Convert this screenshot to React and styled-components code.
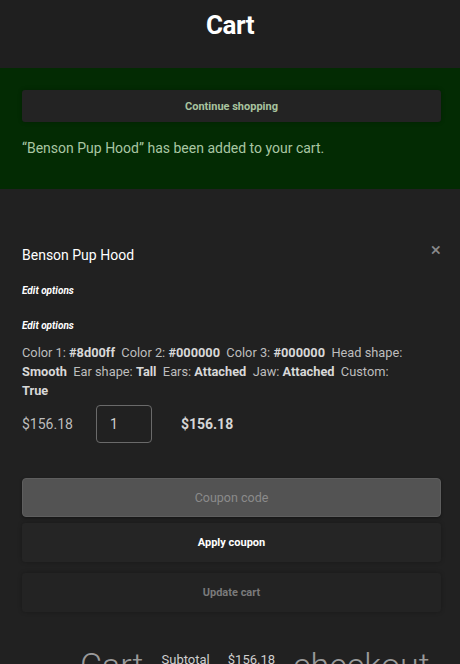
import styled, { createGlobalStyle } from "styled-components";

const GlobalStyle = createGlobalStyle`
  html, body {
    margin: 0;
    padding: 0;
    background: #212121;
    font-family: Roboto, "Liberation Sans", sans-serif;
    overflow: hidden;
  }
`;

const Page = styled.div`
  width: 460px;
  height: 664px;
  overflow: hidden;
  background: #212121;
`;

const Header = styled.header`
  height: 68px;
  display: flex;
  justify-content: center;
  align-items: flex-start;
  background: #1f1f1f;
`;

const Title = styled.h1`
  margin: 10px 0 0;
  font-size: 26px;
  font-weight: 700;
  color: #fff;
  letter-spacing: -0.5px;
`;

const Notice = styled.div`
  background: #032b03;
  padding: 22px 19px 33px 22px;
  display: flex;
  flex-direction: column;
  gap: 18px;
`;

const Button = styled.button`
  height: ${(p) => p.$h || 39}px;
  width: 100%;
  margin-top: ${(p) => p.$mt || 0}px;
  border: none;
  border-radius: 3px;
  background: ${(p) => p.$bg || "#252525"};
  color: ${(p) => p.$color || "#fff"};
  font-family: inherit;
  font-size: 11px;
  font-weight: 700;
  box-shadow: 0 0 4px rgba(0, 0, 0, 0.25);
`;

const Message = styled.p`
  margin: 0;
  font-size: 14px;
  color: #a9c7a3;
`;

const Content = styled.main`
  padding: 58px 19px 0 22px;
`;

const ItemHead = styled.div`
  display: flex;
  justify-content: space-between;
  align-items: center;
`;

const ItemName = styled.h2`
  margin: 0;
  font-size: 14px;
  font-weight: 400;
  color: #fff;
`;

const Remove = styled.span`
  color: #8a8a8a;
  font-size: 19px;
  line-height: 1;
  margin-top: -11px;
`;

const EditLink = styled.div`
  margin-top: ${(p) => p.$mt}px;
  font-size: 10px;
  font-weight: 700;
  font-style: italic;
  color: #fff;
`;

const Options = styled.p`
  margin: 12px 0 0;
  max-width: 386px;
  font-size: 12.8px;
  line-height: 19px;
  color: #bdbdbd;

  b {
    color: #d8d8d8;
  }
`;

const PriceRow = styled.div`
  display: flex;
  align-items: center;
  margin-top: 5px;
  font-size: 14px;
  color: #bdbdbd;
`;

const Qty = styled.div`
  width: 56px;
  height: 38px;
  margin: 0 29px 0 23px;
  border: 1px solid #6a6a6a;
  border-radius: 4px;
  box-sizing: border-box;
  display: flex;
  align-items: center;
  padding-left: 13px;
  color: #cfcfcf;
`;

const Total = styled.span`
  font-weight: 700;
  color: #d6d6d6;
`;

const Actions = styled.div`
  margin-top: 35px;
  display: flex;
  flex-direction: column;
  gap: 6px;
`;

const Coupon = styled.div`
  height: 39px;
  border-radius: 4px;
  background: #535353;
  border: 1px solid #5e5e5e;
  box-sizing: border-box;
  display: flex;
  align-items: center;
  justify-content: center;
  color: #8b8b8b;
  font-size: 12.5px;
  box-shadow: 0 1px 3px rgba(0, 0, 0, 0.4);
`;

const Totals = styled.div`
  display: flex;
  align-items: flex-start;
  gap: 18px;
  margin-top: 36px;
  padding-left: 58px;
  white-space: nowrap;
`;

const Big = styled.span`
  font-size: 34px;
  font-weight: 300;
  color: #9a9a9a;
  line-height: 1;
`;

const Small = styled.span`
  font-size: 13px;
  color: #cfcfcf;
  margin-top: 4px;
`;

export default function App() {
  return (
    <Page>
      <GlobalStyle />
      <Header>
        <Title>Cart</Title>
      </Header>
      <Notice>
        <Button $h={32} $bg="#232323" $color="#a8c39f">
          Continue shopping
        </Button>
        <Message>“Benson Pup Hood” has been added to your cart.</Message>
      </Notice>
      <Content>
        <ItemHead>
          <ItemName>Benson Pup Hood</ItemName>
          <Remove>×</Remove>
        </ItemHead>
        <EditLink $mt={22}>Edit options</EditLink>
        <EditLink $mt={24}>Edit options</EditLink>
        <Options>
          Color 1: <b>#8d00ff</b>&nbsp;&nbsp;Color 2: <b>#000000</b>&nbsp;&nbsp;Color 3:{" "}
          <b>#000000</b>&nbsp;&nbsp;Head shape: <b>Smooth</b>&nbsp;&nbsp;Ear shape:{" "}
          <b>Tall</b>&nbsp;&nbsp;Ears: <b>Attached</b>&nbsp;&nbsp;Jaw: <b>Attached</b>
          &nbsp;&nbsp;Custom: <b>True</b>
        </Options>
        <PriceRow>
          <span>$156.18</span>
          <Qty>1</Qty>
          <Total>$156.18</Total>
        </PriceRow>
        <Actions>
          <Coupon>Coupon code</Coupon>
          <Button>Apply coupon</Button>
          <Button $mt={5} $bg="#232323" $color="#7a7a7a">
            Update cart
          </Button>
        </Actions>
        <Totals>
          <Big>Cart</Big>
          <Small>Subtotal</Small>
          <Small>$156.18</Small>
          <Big>checkout</Big>
        </Totals>
      </Content>
    </Page>
  );
}
